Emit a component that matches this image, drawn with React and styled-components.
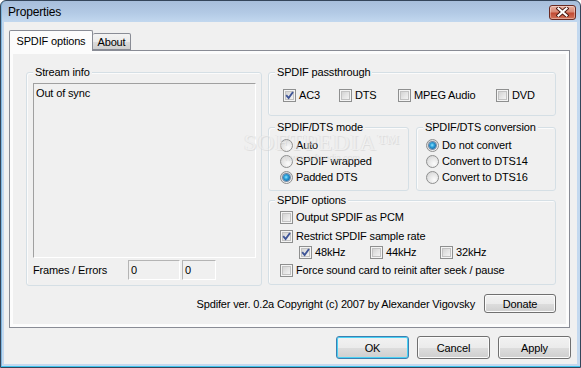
import React from 'react';
import styled, { createGlobalStyle } from 'styled-components';

const Global = createGlobalStyle`
  html, body { margin: 0; padding: 0; background: #ffffff; }
  body { font-family: "Liberation Sans", Arial, sans-serif; font-size: 11px; color: #000; letter-spacing: -0.15px; }
  * { box-sizing: border-box; }
`;

const Window = styled.div`
  position: relative;
  width: 581px;
  height: 368px;
  border: 1px solid #34455a;
  border-radius: 6px 6px 0 0;
  background: linear-gradient(#a7bedb 0px, #b3cae5 12px, #c2d8ef 21px, #c4d9ef 100%);
  box-shadow: inset 0 -1px 0 #3fc3ee, inset 1px 0 0 #7fb5dd;
  padding: 0 3px 3px 3px;
  display: flex;
  flex-direction: column;
  overflow: hidden;
`;

const TitleBar = styled.div`
  height: 21px;
  flex: none;
  display: flex;
  align-items: center;
  justify-content: space-between;
  padding: 0 1px 0 4px;
  font-family: "Liberation Sans", Arial, sans-serif;
  font-size: 12px;
  color: #000;
`;

const CloseBtn = styled.div`
  width: 27px;
  height: 15px;
  margin-top: 1px;
  border: 1px solid #6a2a22;
  border-radius: 3px;
  background: linear-gradient(#e8b0a0 0%, #d98a76 45%, #c14a33 55%, #d2735a 100%);
  box-shadow: inset 0 0 0 1px rgba(255, 255, 255, 0.35);
  display: flex;
  align-items: center;
  justify-content: center;
`;

const Client = styled.div`
  flex: 1;
  background: #f0f0f0;
  display: flex;
  flex-direction: column;
  padding: 8px 7px 0 5px;
`;

const TabStrip = styled.div`
  display: flex;
  align-items: flex-end;
  height: 21px;
  margin-bottom: -1px;
  position: relative;
  z-index: 2;
`;

const Tab = styled.div`
  height: ${(p) => (p.$active ? 21 : 17)}px;
  width: ${(p) => p.$w}px;
  margin-bottom: ${(p) => (p.$active ? 0 : 1)}px;
  border: 1px solid #898c95;
  border-bottom: ${(p) => (p.$active ? 'none' : '1px solid #898c95')};
  border-left: ${(p) => (p.$active ? '1px solid #898c95' : 'none')};
  border-radius: 2px 2px 0 0;
  background: ${(p) =>
    p.$active ? '#fcfcfc' : 'linear-gradient(#f3f3f3 0%, #ebebeb 50%, #dcdcdc 51%, #cfcfcf 100%)'};
  display: flex;
  align-items: center;
  justify-content: center;
  padding-top: ${(p) => (p.$active ? 0 : 1)}px;
`;

const Panel = styled.div`
  height: 278px;
  flex: none;
  border: 1px solid #898c95;
  background: #fcfcfc;
  padding: 3px;
  display: flex;
`;

const Page = styled.div`
  flex: 1;
  background: #f0f0f0;
  display: flex;
  flex-direction: column;
  padding: 12px 10px 0 13px;
`;

const MainRow = styled.div`
  display: flex;
  gap: 6px;
`;

const Column = styled.div`
  display: flex;
  flex-direction: column;
  width: ${(p) => p.$w}px;
`;

const GroupWrap = styled.div`
  display: flex;
  flex-direction: column;
  width: ${(p) => (p.$w ? `${p.$w}px` : 'auto')};
  margin-top: ${(p) => p.$mt || 0}px;
`;

const Legend = styled.span`
  align-self: flex-start;
  height: 13px;
  line-height: 13px;
  margin: 0 0 -7px 7px;
  padding: 0 2px;
  background: #f0f0f0;
  position: relative;
  z-index: 1;
  white-space: nowrap;
`;

const Frame = styled.div`
  height: ${(p) => p.$h}px;
  border: 1px solid #d5dfe5;
  border-radius: 3px;
  box-shadow: inset 1px 1px 0 #fbfbfb;
  padding: ${(p) => p.$pad};
  display: flex;
  flex-direction: column;
`;

const ListBox = styled.div`
  width: 223px;
  height: 175px;
  border: 1px solid;
  border-color: #a0a0a0 #ffffff #ffffff #a0a0a0;
  padding: 3px 2px;
  line-height: 13px;
`;

const StatRow = styled.div`
  display: flex;
  align-items: center;
  height: 20px;
  margin-top: 2px;
  gap: 2px;
`;

const StatLabel = styled.span`
  width: 93px;
`;

const ValueBox = styled.div`
  width: ${(p) => p.$w}px;
  height: 20px;
  border: 1px solid;
  border-color: #b4b4b4 #ffffff #ffffff #b4b4b4;
  padding: 0 2px;
  display: flex;
  align-items: center;
`;

const GridRow = styled.div`
  display: grid;
  grid-template-columns: ${(p) => p.$cols};
  padding-left: ${(p) => p.$indent || 0}px;
  margin-top: ${(p) => p.$mt || 0}px;
`;

const OptRow = styled.label`
  display: flex;
  align-items: center;
  gap: 3px;
  height: 16px;
  margin-top: ${(p) => p.$mt || 0}px;
  white-space: nowrap;
`;

const Box = styled.span`
  position: relative;
  width: 13px;
  height: 13px;
  flex: none;
  border: 1px solid #8e8f8f;
  padding: 1px;
  background: #f4f4f4;
`;

const BoxInner = styled.span`
  display: block;
  width: 9px;
  height: 9px;
  background: linear-gradient(135deg, #cfcfcf 0%, #e6e6e6 55%, #f7f7f7 100%);
  box-shadow: inset 0 0 0 1px #c2c2c2;
`;

const CheckMark = styled.svg`
  position: absolute;
  left: -1px;
  top: -1px;
`;

const RadioCircle = styled.span`
  width: 13px;
  height: 13px;
  flex: none;
  border-radius: 50%;
  border: 1px solid #8e8f8f;
  background: radial-gradient(circle at 65% 70%, #fbfbfb 0%, #e4e4e4 55%, #cbcbcb 100%);
  display: flex;
  align-items: center;
  justify-content: center;
`;

const RadioDot = styled.span`
  width: 7px;
  height: 7px;
  border-radius: 50%;
  background: radial-gradient(circle at 45% 45%, #8fe6ff 0%, #2fa4dd 35%, #0b4f8c 90%);
  box-shadow: 0 0 0 1px rgba(20, 60, 110, 0.55);
`;

const PairRow = styled.div`
  display: flex;
  gap: 7px;
  margin-top: 5px;
`;

const Footer = styled.div`
  display: flex;
  justify-content: flex-end;
  align-items: center;
  gap: 9px;
  margin-top: 8px;
  height: 19px;
`;

const Btn = styled.button`
  width: ${(p) => p.$w}px;
  height: ${(p) => p.$h}px;
  padding: 0;
  font-family: "Liberation Sans", Arial, sans-serif;
  font-size: 11px;
  letter-spacing: -0.15px;
  color: #000;
  border: 1px solid ${(p) => (p.$default ? '#3c7fb1' : '#707070')};
  border-radius: 3px;
  background: linear-gradient(#f2f2f2 0%, #ebebeb 50%, #dddddd 51%, #cfcfcf 100%);
  box-shadow: inset 0 0 0 1px ${(p) => (p.$default ? '#49d1f4' : '#fbfbfb')};
`;

const ButtonRow = styled.div`
  display: flex;
  justify-content: flex-end;
  gap: 8px;
  margin-top: 8px;
  margin-right: -1px;
`;

const Watermark = styled.div`
  position: absolute;
  left: 243px;
  top: 129px;
  pointer-events: none;
  display: flex;
  flex-direction: column;
  align-items: center;
  opacity: 0.55;
`;

const WmBig = styled.span`
  font-family: "Liberation Serif", serif;
  font-size: 23px;
  letter-spacing: 1px;
  color: rgba(255, 255, 255, 0.6);
  text-shadow: 1px 1px 0 #d0d0d0, -1px 0 0 #dcdcdc;
`;

const WmSmall = styled.span`
  font-family: "Liberation Sans", sans-serif;
  font-size: 9px;
  margin-top: -3px;
  color: #d4d4d4;
`;

function Check({ checked, children, mt }) {
  return (
    <OptRow $mt={mt}>
      <Box>
        <BoxInner />
        {checked && (
          <CheckMark width="13" height="13" viewBox="0 0 13 13">
            <path d="M3.2 6.2 L5.6 9 L10 3" fill="none" stroke="#3f5597" strokeWidth="1.9" />
          </CheckMark>
        )}
      </Box>
      <span>{children}</span>
    </OptRow>
  );
}

function Radio({ checked, children }) {
  return (
    <OptRow>
      <RadioCircle>{checked && <RadioDot />}</RadioCircle>
      <span>{children}</span>
    </OptRow>
  );
}

function Group({ label, w, h, pad, mt, children }) {
  return (
    <GroupWrap $w={w} $mt={mt}>
      <Legend>{label}</Legend>
      <Frame $h={h} $pad={pad}>
        {children}
      </Frame>
    </GroupWrap>
  );
}

export default function App() {
  return (
    <>
      <Global />
      <Window>
        <TitleBar>
          <span>Properties</span>
          <CloseBtn>
            <svg width="13" height="10" viewBox="0 0 13 10">
              <path d="M2.5 1.5 L10.5 8.5 M10.5 1.5 L2.5 8.5" stroke="#4a1a12" strokeWidth="4" strokeLinecap="square" />
              <path d="M2.5 1.5 L10.5 8.5 M10.5 1.5 L2.5 8.5" stroke="#ffffff" strokeWidth="2.2" strokeLinecap="square" />
            </svg>
          </CloseBtn>
        </TitleBar>
        <Client>
          <TabStrip>
            <Tab $active $w={84}>SPDIF options</Tab>
            <Tab $w={38}>About</Tab>
          </TabStrip>
          <Panel>
            <Page>
              <MainRow>
                <Column $w={236}>
                  <Group label="Stream info" h={214} pad="10px 6px 0 6px">
                    <ListBox>Out of sync</ListBox>
                    <StatRow>
                      <StatLabel>Frames / Errors</StatLabel>
                      <ValueBox $w={52}>0</ValueBox>
                      <ValueBox $w={34}>0</ValueBox>
                    </StatRow>
                  </Group>
                </Column>
                <Column $w={288}>
                  <Group label="SPDIF passthrough" h={44} pad="14px 0 0 14px">
                    <GridRow $cols="56px 59px 98px auto">
                      <Check checked>AC3</Check>
                      <Check>DTS</Check>
                      <Check>MPEG Audio</Check>
                      <Check>DVD</Check>
                    </GridRow>
                  </Group>
                  <PairRow>
                    <Group label="SPDIF/DTS mode" w={141} h={64} pad="9px 0 0 11px">
                      <Radio>Auto</Radio>
                      <Radio>SPDIF wrapped</Radio>
                      <Radio checked>Padded DTS</Radio>
                    </Group>
                    <Group label="SPDIF/DTS conversion" w={140} h={64} pad="9px 0 0 9px">
                      <Radio checked>Do not convert</Radio>
                      <Radio>Convert to DTS14</Radio>
                      <Radio>Convert to DTS16</Radio>
                    </Group>
                  </PairRow>
                  <Group label="SPDIF options" h={85} mt={3} pad="8px 0 0 11px">
                    <Check>Output SPDIF as PCM</Check>
                    <Check checked mt={3}>Restrict SPDIF sample rate</Check>
                    <GridRow $cols="71px 70px auto" $indent={19}>
                      <Check checked>48kHz</Check>
                      <Check>44kHz</Check>
                      <Check>32kHz</Check>
                    </GridRow>
                    <Check mt={2}>Force sound card to reinit after seek / pause</Check>
                  </Group>
                </Column>
              </MainRow>
              <Footer>
                <span>Spdifer ver. 0.2a Copyright (c) 2007 by Alexander Vigovsky</span>
                <Btn $w={72} $h={19}>Donate</Btn>
              </Footer>
            </Page>
          </Panel>
          <ButtonRow>
            <Btn $default $w={73} $h={23}>OK</Btn>
            <Btn $w={73} $h={23}>Cancel</Btn>
            <Btn $w={73} $h={23}>Apply</Btn>
          </ButtonRow>
        </Client>
        <Watermark>
          <WmBig>SOFTPEDIA™</WmBig>
          <WmSmall>www.softpedia.com</WmSmall>
        </Watermark>
      </Window>
    </>
  );
}
